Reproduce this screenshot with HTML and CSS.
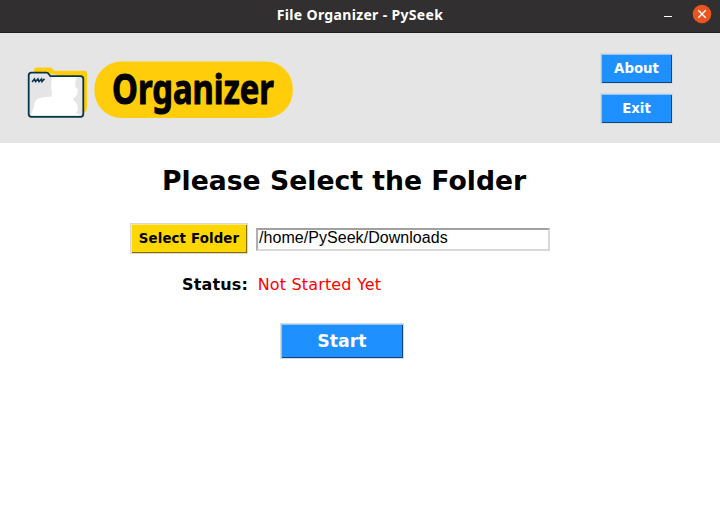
FILE: index.html
```
<!DOCTYPE html>
<html lang="en">
<head>
<meta charset="utf-8">
<title>File Organizer - PySeek</title>
<link rel="stylesheet" href="styles.css">
</head>
<body>
<div class="titlebar">
  <span class="window-title">File Organizer - PySeek</span>
  <div class="window-controls">
    <span class="minimize"></span>
    <svg class="close" width="20" height="20" viewBox="0 0 20 20"><circle cx="10" cy="10" r="9.3" fill="#e95420"/><path d="M6.3 6.3l7.4 7.4M13.7 6.3l-7.4 7.4" stroke="#fff" stroke-width="1.4"/></svg>
  </div>
</div>
<header class="header">
  <svg class="logo" width="270" height="62" viewBox="25 59 270 62">
    <path d="M34 72V70Q34 67.6 36.4 67.6H50Q52 67.6 53 69.3L54 70.8H84.5Q87 70.8 87 73.3V107Q87 111 83 113.5V78Z" fill="#ffcd0a"/>
    <path d="M28.7 75.5Q28.7 72.7 31.5 72.7H46.5Q48 72.7 48.8 74L50.4 76.2H80.5Q83.3 76.2 83.3 79V114Q83.3 116.8 80.5 116.8H31.5Q28.7 116.8 28.7 114Z" fill="#e5e5e8"/>
    <path d="M52 77H77Q75 82 75 86L78 90L77 95L73 99L77 104L78 110L76 113L80 115H31L34 106Q35 98 40 98Q48 96 51 97Q53 94 51 88Z" fill="#fff"/>
    <path d="M28.7 75.5Q28.7 72.7 31.5 72.7H46.5Q48 72.7 48.8 74L50.4 76.2H80.5Q83.3 76.2 83.3 79V114Q83.3 116.8 80.5 116.8H31.5Q28.7 116.8 28.7 114Z" fill="none" stroke="#07364a" stroke-width="1.8"/>
    <path d="M32 82L34.5 79L35.5 81.5L38 79L39 81.5L41.5 79L42 81.5L44.5 78.7" fill="none" stroke="#07364a" stroke-width="1.6"/>
    <rect x="94.4" y="61.5" width="198.4" height="56.5" rx="27" fill="#ffcd0a"/>
    <text class="logo-text" x="112" y="104.3" textLength="162" lengthAdjust="spacingAndGlyphs">Organizer</text>
  </svg>
  <div class="actions">
    <button class="btn blue small">About</button>
    <button class="btn blue small">Exit</button>
  </div>
</header>
<main class="content">
  <h1 class="heading">Please Select the Folder</h1>
  <div class="folder-row">
    <button class="btn yellow">Select Folder</button>
    <div class="entry">/home/PySeek/Downloads</div>
  </div>
  <div class="status-row">
    <span class="status-label">Status:</span>
    <span class="status-value">Not Started Yet</span>
  </div>
  <button class="btn blue start">Start</button>
</main>
</body>
</html>
```
FILE: styles.css
```
* { box-sizing: border-box; }
body {
  margin: 0;
  width: 720px;
  height: 519px;
  overflow: hidden;
  background: #fff;
  color: #000;
  font-family: "DejaVu Sans", sans-serif;
}
.titlebar {
  display: grid;
  grid-template-columns: 1fr auto 1fr;
  height: 33px;
  background: #322f30;
  border-bottom: 1px solid #1f1d1e;
}
.window-title {
  grid-column: 2;
  color: #fff;
  font: bold 14px/30px "Noto Sans", sans-serif;
  letter-spacing: 0.33px;
  white-space: nowrap;
}
.window-controls {
  display: flex;
  justify-content: flex-end;
  align-items: flex-start;
  gap: 20px;
  padding: 4px 8px 0 0;
}
.minimize {
  width: 8px;
  height: 1px;
  margin-top: 12px;
  background: #fff;
}
.header {
  display: flex;
  justify-content: space-between;
  height: 110px;
  padding: 20px 47px 0 25px;
  background: #e5e5e5;
}
.logo { margin-top: 6px; overflow: visible; }
.logo-text {
  font: 700 41px/1 "Noto Sans", sans-serif;
  stroke: #000;
  stroke-width: 1px;
  stroke-linejoin: round;
}
.actions {
  display: flex;
  flex-direction: column;
  gap: 9px;
}
.btn {
  display: block;
  height: 31px;
  margin: 0;
  padding: 0;
  border: 1px solid #d9d9d9;
  font: bold 13.33px/27px "DejaVu Sans", sans-serif;
  text-align: center;
  white-space: nowrap;
}
.blue {
  background-color: #1e90ff;
  color: #fff;
  box-shadow: inset 1px 1px #8ec7ff, inset -1px -1px #0f4880;
}
.small { width: 73px; }
.yellow {
  width: 118px;
  background-color: #ffd700;
  color: #000;
  letter-spacing: 0.15px;
  box-shadow: inset 1px 1px #ffeb80, inset -1px -1px #806c00;
}
.content { padding-top: 22px; }
.heading {
  margin: 0 0 0 162px;
  font-size: 26.67px;
  line-height: 32px;
  font-weight: bold;
}
.folder-row {
  display: flex;
  gap: 8px;
  margin: 26px 0 0 130px;
}
.entry {
  width: 294px;
  height: 23px;
  margin-top: 5px;
  padding-left: 1px;
  border: 2px solid;
  border-color: #a0a0a0 #d9d9d9 #d9d9d9 #b0b0b0;
  font: 16px/16px "Liberation Sans", sans-serif;
  letter-spacing: 0.05px;
}
.status-row {
  display: flex;
  gap: 9.5px;
  margin: 21px 0 0 182px;
  font-size: 16px;
  line-height: 20px;
  letter-spacing: 0.17px;
}
.status-label { font-weight: bold; }
.status-value { color: #f00; }
.start {
  width: 124px;
  height: 36px;
  margin: 28px 0 0 280px;
  font-size: 17.33px;
}
```
